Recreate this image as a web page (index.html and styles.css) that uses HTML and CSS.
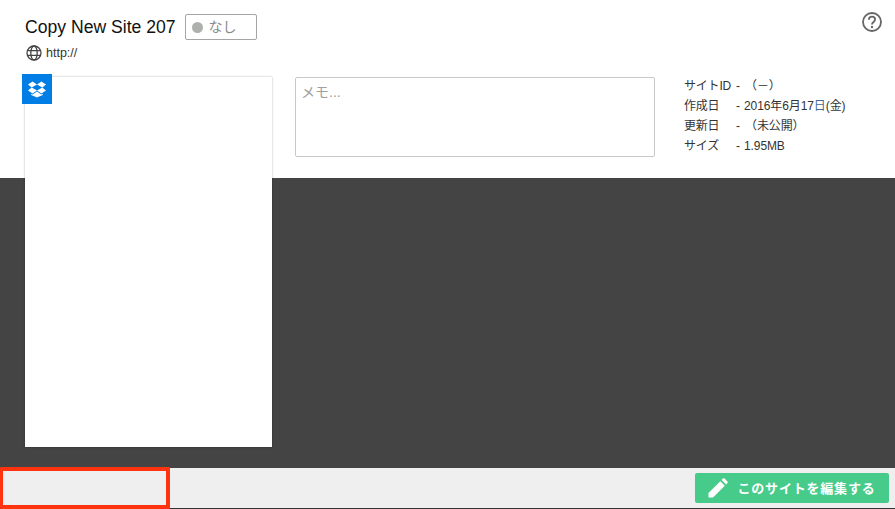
FILE: index.html
```
<!DOCTYPE html>
<html lang="ja">
<head>
<meta charset="utf-8">
<title>Copy New Site 207</title>
<link rel="stylesheet" href="styles.css">
</head>
<body>
<div class="page">
  <header class="top">
    <div class="title-row">
      <h1 class="title">Copy New Site 207</h1>
      <div class="status"><span class="dot"></span><span class="status-text">なし</span></div>
    </div>
    <div class="url-row">
      <svg class="globe" width="16" height="16" viewBox="0 0 16 16" fill="none" stroke="#444" stroke-width="1.3">
        <circle cx="8" cy="8" r="7"/>
        <ellipse cx="8" cy="8" rx="3.2" ry="7"/>
        <path d="M1 5.6h14M1 10.4h14"/>
      </svg>
      <span class="url">http://</span>
    </div>
    <div class="details">
      <div class="card">
        <div class="badge">
          <svg width="18" height="17" viewBox="0 0 18 17" fill="#fff">
            <path d="M4.600 0.600 0 3.600l3.700 3L9 3.600zM13.400 0.600 9 3.600l5.300 3 3.700-3zM0 9.600l4.600 3L9 9.600 3.700 6.600zM14.300 6.600 9 9.600l4.400 3 4.600-3zM9 10.600l-4.400 3-1.400-.9v1.200L9 16.600l5.800-2.700v-1.200l-1.400.9z"/>
          </svg>
        </div>
      </div>
      <div class="memo">メモ...</div>
      <dl class="info">
        <div class="info-row"><dt>サイトID</dt><dd>-<span class="val wide">（－）</span></dd></div>
        <div class="info-row"><dt>作成日</dt><dd>-<span class="val">2016年6月17<span class="sun">日</span>(金)</span></dd></div>
        <div class="info-row"><dt>更新日</dt><dd>-<span class="val wide">（未公開）</span></dd></div>
        <div class="info-row"><dt>サイズ</dt><dd>-<span class="val">1.95MB</span></dd></div>
      </dl>
    </div>
    <svg class="help" width="20" height="20" viewBox="0 0 20 20" fill="none">
      <circle cx="10" cy="10" r="9" stroke="#666" stroke-width="1.800"/>
      <path d="M6.900 7.700c0-1.900 1.400-3 3.100-3s3.100 1.100 3.100 2.800c0 2.400-3.100 2.500-3.100 5" stroke="#666" stroke-width="1.800"/>
      <circle cx="10" cy="15" r="1.200" fill="#666"/>
    </svg>
  </header>
  <main class="stage"></main>
  <footer class="bottom">
    <div class="highlight"></div>
    <button class="edit" type="button">
      <svg width="20" height="20" viewBox="0 0 20 20" fill="#fff">
        <path d="M0.500 19.500v-4.500L12.300 3.200l4.500 4.500L5 19.500zM13.600 1.900l1.300-1.300a1.200 1.200 0 0 1 1.700 0l2.800 2.800a1.200 1.200 0 0 1 0 1.700l-1.300 1.300z"/>
      </svg>
      <span class="edit-label">このサイトを編集する</span>
    </button>
  </footer>
</div>
</body>
</html>
```

FILE: styles.css
```
* { box-sizing: border-box; }
html, body { margin: 0; padding: 0; }
body {
  font-family: "Liberation Sans", "Noto Sans CJK JP", sans-serif;
  color: #333;
  background: #fff;
}
.page {
  width: 895px;
  height: 509px;
  display: flex;
  flex-direction: column;
  overflow: hidden;
}
.top {
  position: relative;
  flex: 0 0 178px;
  height: 178px;
  padding: 14px 0 0 25px;
  background: #fff;
}
.title-row {
  display: flex;
  align-items: center;
  height: 26px;
}
.title {
  margin: 0;
  font-size: 17.6px;
  font-weight: 400;
  line-height: 27px;
  color: #111;
}
.status {
  display: flex;
  align-items: center;
  width: 72px;
  height: 26px;
  margin-left: 9px;
  padding-left: 6px;
  border: 1px solid #a5a5a5;
  border-radius: 2px;
}
.dot {
  width: 11px;
  height: 11px;
  border-radius: 50%;
  background: #adb0ad;
}
.status-text {
  margin-left: 6px;
  font-size: 14px;
  line-height: 20px;
  color: #888;
}
.url-row {
  display: flex;
  align-items: center;
  height: 16px;
  margin-top: 5px;
  margin-left: 1px;
}
.url {
  margin-left: 4px;
  font-size: 12.5px;
  color: #333;
}
.details {
  display: flex;
  align-items: flex-start;
  margin-top: 16px;
}
.card {
  position: relative;
  z-index: 1;
  flex: 0 0 247px;
  height: 370px;
  background: #fff;
  box-shadow: 0 0 2px rgba(0, 0, 0, .3);
}
.badge {
  position: absolute;
  left: -3px;
  top: -3px;
  width: 30px;
  height: 30px;
  display: flex;
  align-items: center;
  justify-content: center;
  background: #007ee5;
}
.memo {
  flex: 0 0 360px;
  height: 80px;
  margin-left: 23px;
  padding: 6px 5px;
  border: 1px solid #c8c8c8;
  border-radius: 2px;
  font-size: 14px;
  line-height: 17px;
  color: #a0a0a0;
}
.info {
  margin: 1px 0 0 29px;
  font-size: 12px;
  color: #333;
}
.info-row {
  display: flex;
  height: 20px;
  line-height: 17px;
}
.info-row dt { flex: 0 0 52px; white-space: nowrap; letter-spacing: -0.2px; }
.info-row dd { margin: 0; display: flex; white-space: nowrap; }
.val { margin-left: 4px; letter-spacing: -0.1px; }
.val.wide { margin-left: 5px; }
.sun { color: #3f6a94; }
.help {
  position: absolute;
  top: 12px;
  right: 13px;
}
.stage {
  flex: 1 1 auto;
  background: #444;
}
.bottom {
  position: relative;
  flex: 0 0 41px;
  display: flex;
  justify-content: flex-end;
  align-items: flex-start;
  padding: 5px 6px 0 0;
  background: #efefef;
  border-bottom: 1px solid #333;
}
.highlight {
  position: absolute;
  left: 0;
  top: -1px;
  width: 170px;
  height: 42px;
  border-style: solid;
  border-color: #ff3310;
  border-width: 4px 4px 4px 3px;
  border-radius: 1px;
}
.edit {
  display: flex;
  align-items: center;
  justify-content: center;
  gap: 9px;
  width: 194px;
  height: 30px;
  padding: 0;
  border: 0;
  border-radius: 2px;
  background: #47cb8a;
  color: #fff;
  font-family: "Noto Sans CJK JP", sans-serif;
  font-size: 13px;
  font-weight: 700;
  letter-spacing: 0.8px;
}
.edit-label { position: relative; top: -1px; }
```
